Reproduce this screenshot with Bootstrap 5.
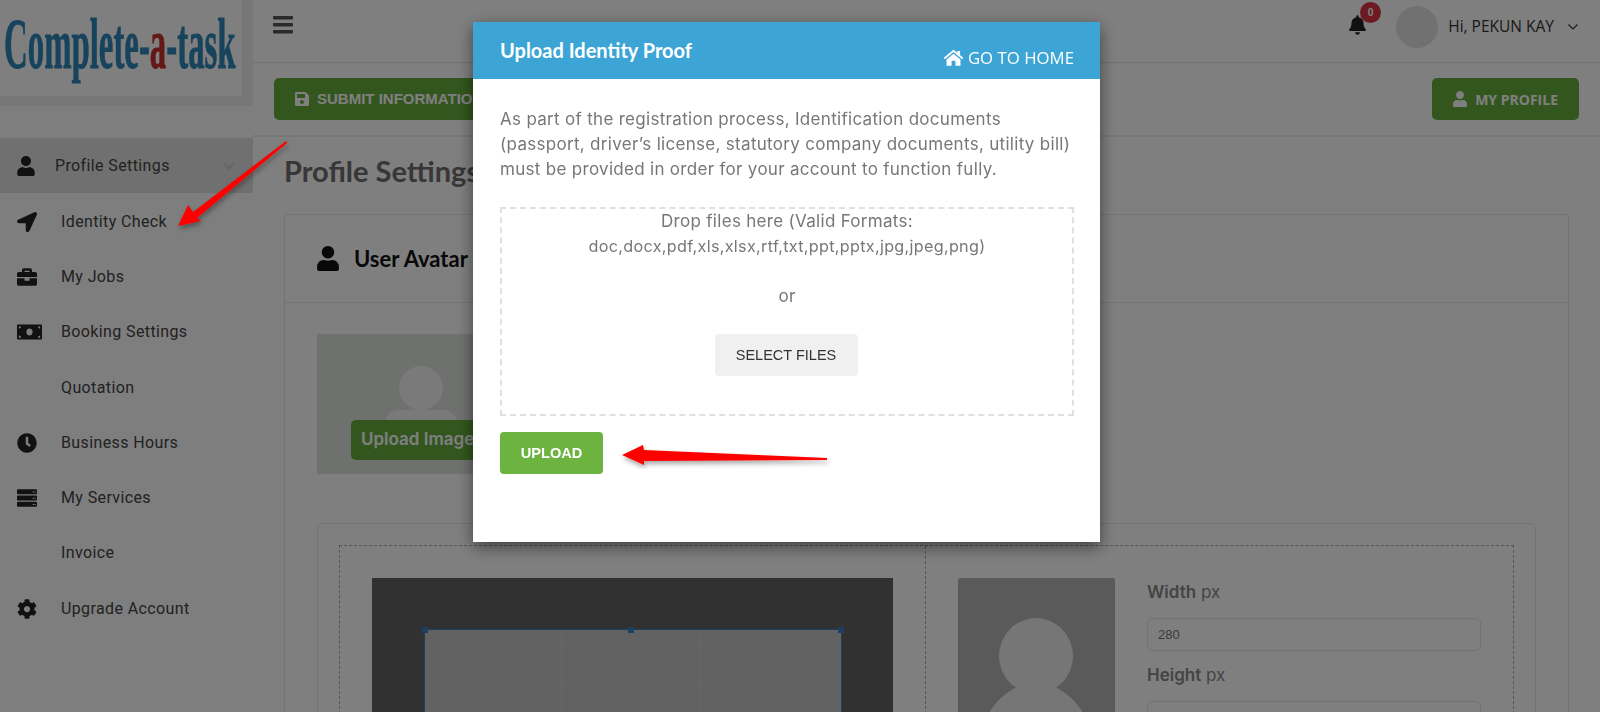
<!DOCTYPE html>
<html lang="en">
<head>
    <meta charset="UTF-8">
    <meta name="viewport" content="width=device-width, initial-scale=1.0">
    <title>Upload Identity Proof</title>
    <link href="https://cdn.jsdelivr.net/npm/bootstrap@5.3.0/dist/css/bootstrap.min.css" rel="stylesheet">
    <style>
        html, body { height: 712px; overflow: hidden; }
        body { background: #fff; font-family: "Roboto", sans-serif; color: #444; }
        .ico { fill: currentColor; display: block; flex: none; }

        .side-col { width: 253px; flex: none; height: 712px; background: #fcfcfc; }
        .logo-wrap { height: 106px; background: #eee; padding-right: 11px; padding-bottom: 10px; margin-bottom: 32px; }
        .logo-box { background: #fff; height: 96px; overflow: hidden; }
        .logo-word { font-family: "Liberation Serif", serif; font-weight: 700; font-size: 72px; line-height: 96px; color: #2f86b8; white-space: nowrap; display: inline-block; transform: translate(4px, -4px) scaleX(.456); transform-origin: left center; -webkit-text-stroke: .8px #2f86b8; }
        .logo-a { color: #c8302b; -webkit-text-stroke-color: #c8302b; }
        .side-row { height: 55.3px; padding-left: 17px; color: #444; font-size: 16px; text-decoration: none; letter-spacing: .38px; }
        .side-row .ico { color: #222; }
        .side-label { margin-left: 44px; }
        .side-icon { width: 44px; flex: none; }
        .side-icon + .side-label { margin-left: 0; }
        .side-active { background: #e0e0e0; height: 55px; margin-bottom: 1px; }
        .side-active .side-icon { width: 38px; }
        .side-chev { margin-left: auto; margin-right: 18px; color: #ccc; }

        .main-col { min-width: 0; }
        .top-strip { height: 63px; border-bottom: 1px solid #e2e2e2; padding: 0 22px 9px 20px; }
        .bell-wrap { margin-right: 30px; margin-bottom: 3px; }
        .bell-count { position: absolute; top: -13px; left: 11px; width: 21px; height: 21px; border-radius: 50%; background: #dc3545; color: #fff; font-size: 10px; font-weight: 700; line-height: 21px; text-align: center; }
        .face-dot { width: 42px; height: 42px; border-radius: 50%; background: #e2e2e2; margin-right: 10px; }
        .hi-name { font-family: "Open Sans", sans-serif; font-size: 15.5px; color: #333; margin-right: 14px; }
        .tool-strip { height: 74px; border-bottom: 2px solid #eee; padding: 15px 21px 0 21px; }
        .btn-green { background: #66ad3c; color: #fff; border: 0; border-radius: 5px; height: 42px; font-family: "Open Sans", sans-serif; font-weight: 700; font-size: 14px; padding: 0 21px; }
        .btn-green-arial { font-family: "Liberation Sans", sans-serif; font-size: 15px; }
        .page-title { font-family: "Lato", sans-serif; font-weight: 700; font-size: 29px; color: #6e6e6e; margin: 17px 0 26px 31px; line-height: 34px; white-space: nowrap; }

        .panel-box { margin: 0 31px 0 31px; border: 1px solid #e8e8e8; border-radius: 2px; }
        .panel-head { height: 88px; border-bottom: 1px solid #e8e8e8; padding-left: 32px; }
        .panel-head span { font-family: "Lato", sans-serif; font-weight: 700; font-size: 22px; color: #111; margin-left: 15px; }
        .panel-body { padding: 31px 32px; }
        .avatar-block { width: 270px; height: 140px; background: #dfe2df; margin-bottom: 49px; padding: 32px 0 0 0; }
        .avatar-round { width: 44px; height: 44px; border-radius: 50%; background: #f4f4f4; margin-left: 82px; }
        .avatar-torso { width: 72px; height: 14px; border-radius: 36px 36px 0 0; background: #f4f4f4; margin: 0 0 0 68px; }
        .upload-pill { position: absolute; left: 34px; top: 86px; height: 40px; width: 170px; background: #66ad3c; color: #fff; border: 0; border-radius: 5px; font-family: "Inter", sans-serif; font-weight: 600; font-size: 17px; text-align: left; padding-left: 10px; white-space: nowrap; }
        .crop-card { border: 1px solid #e8e8e8; border-radius: 5px; padding: 21px 21px 0; margin-right: 0; }
        .crop-dash { border: 1px dashed #aaa; height: 300px; }
        .crop-left { width: 586px; flex: none; border-right: 1px dashed #aaa; padding: 32px 0 0 32px; }
        .crop-stage { width: 521px; height: 300px; background: #626262; padding: 51px 0 0 52px; }
        .crop-area { width: 418px; height: 200px; background: #c4c4c4; border: 1px solid #3b7fc4; position: relative; }
        .crop-area::before, .crop-area::after { content: ""; position: absolute; top: 0; bottom: 0; border-left: 1px dashed #d4d4d4; }
        .crop-area::before { left: 136px; }
        .crop-area::after { left: 275px; }
        .crop-handle { position: absolute; width: 6px; height: 6px; background: #3b7fc4; top: -3px; }
        .crop-right { padding: 32px 0 0 32px; }
        .thumb-box { width: 157px; height: 300px; background: #b4b4b4; border-radius: 2px; overflow: hidden; }
        .thumb-svg { display: block; fill: #ececec; }
        .size-fields { width: 334px; margin-left: 32px; padding-top: 2px; }
        .size-fields label { font-family: "Inter", sans-serif; font-size: 17px; color: #888; margin-bottom: 14px; display: block; line-height: 24px; }
        .size-fields b { font-weight: 600; }
        .size-input { height: 33px; border: 1px solid #e4e4e4; border-radius: 5px; font-size: 13px; color: #777; padding: 0 10px; margin-bottom: 12px; line-height: 31px; font-family: "Liberation Sans", sans-serif; }

        .modal-dialog.proof-dialog { width: 627px; max-width: none; margin: 22px 0 0 473px; }
        .proof-dialog .modal-content { height: 520px; border: 0; border-radius: 0; box-shadow: 0 5px 15px rgba(0,0,0,.5); display: block; }
        .proof-head { height: 57px; background: #3ca5d6; color: #fff; padding: 0 26px 0 27px; }
        .proof-title { font-family: "Lato", sans-serif; font-weight: 700; font-size: 20px; margin-top: -1px; }
        .proof-home { font-family: "Open Sans", sans-serif; font-size: 16.8px; margin-top: 14px; }
        .proof-body { padding: 28px 26px 0 27px; font-family: "Inter", sans-serif; color: #777; font-size: 17px; line-height: 25px; letter-spacing: .3px; }
        .proof-text { margin-bottom: 25px; white-space: nowrap; }
        .drop-zone { height: 209px; border: 2px dashed #e0e0e0; text-align: center; margin-bottom: 16px; }
        .drop-types { font-size: 16.2px; letter-spacing: .3px; }
        .drop-or { margin-top: 25px; margin-bottom: 25px; color: #777; }
        .btn-pick { background: #f0f0f0; color: #333; border: 0; border-radius: 4px; width: 143px; height: 42px; font-family: "Liberation Sans", sans-serif; font-size: 14.5px; padding: 0; letter-spacing: 0; margin-right: 2px; }
        .btn-send { background: #6cb33f; color: #fff; border: 0; border-radius: 4px; width: 103px; height: 42px; font-family: "Liberation Sans", sans-serif; font-weight: 700; font-size: 14.6px; padding: 0; display: block; letter-spacing: 0; }
        .arrow-layer { position: fixed; inset: 0; z-index: 1060; pointer-events: none; }
    </style>
</head>
<body>
    <svg width="0" height="0" class="position-absolute">
        <symbol id="i-user" viewBox="0 0 448 512"><path d="M224 256c70.7 0 128-57.3 128-128S294.7 0 224 0 96 57.3 96 128s57.3 128 128 128zm89.6 32h-16.7c-22.2 10.2-46.9 16-72.9 16s-50.6-5.8-72.9-16h-16.7C60.2 288 0 348.2 0 422.4V464c0 26.5 21.5 48 48 48h352c26.5 0 48-21.5 48-48v-41.6c0-74.2-60.2-134.4-134.4-134.4z"/></symbol>
        <symbol id="i-arrow" viewBox="0 0 512 512"><path d="M444.52 3.52L28.74 195.42c-47.97 22.39-31.98 92.75 19.19 92.75h175.91v175.91c0 51.17 70.36 67.17 92.75 19.19l191.9-415.78c15.99-38.39-25.59-79.97-63.97-63.97z"/></symbol>
        <symbol id="i-case" viewBox="0 0 512 512"><path d="M320 336c0 8.84-7.16 16-16 16h-96c-8.84 0-16-7.16-16-16v-48H0v144c0 25.6 22.4 48 48 48h416c25.6 0 48-22.4 48-48V288H320v48zm144-208h-80V80c0-25.6-22.4-48-48-48H176c-25.6 0-48 22.4-48 48v48H48c-25.6 0-48 22.4-48 48v80h512v-80c0-25.6-22.4-48-48-48zm-144 0H192V96h128v32z"/></symbol>
        <symbol id="i-money" viewBox="0 0 640 512"><path fill-rule="evenodd" d="M608 64H32C14.3 64 0 78.3 0 96v320c0 17.7 14.3 32 32 32h576c17.700 0 32-14.300 32-32V96c0-17.700-14.300-32-32-32zM320 168c48 0 80 40 80 88s-32 88-80 88-80-40-80-88 32-88 80-88zM48 112h56c0 32-24 56-56 56zm0 288v-56c32 0 56 24 56 56zm544 0h-56c0-32 24-56 56-56zm0-232c-32 0-56-24-56-56h56z"/></symbol>
        <symbol id="i-clock" viewBox="0 0 512 512"><path d="M256,8C119,8,8,119,8,256S119,504,256,504,504,393,504,256,393,8,256,8Zm92.49,313h0l-20,25a16,16,0,0,1-22.49,2.5h0l-67-49.72a40,40,0,0,1-15-31.23V112a16,16,0,0,1,16-16h32a16,16,0,0,1,16,16V256l58,42.5A16,16,0,0,1,348.49,321Z"/></symbol>
        <symbol id="i-server" viewBox="0 0 512 512"><path fill-rule="evenodd" d="M24 32h464a24 24 0 0 1 24 24v80a24 24 0 0 1-24 24H24a24 24 0 0 1-24-24V56a24 24 0 0 1 24-24zm376 56v24h32V88zm48 0v24h32V88zM24 192h464a24 24 0 0 1 24 24v80a24 24 0 0 1-24 24H24a24 24 0 0 1-24-24v-80a24 24 0 0 1 24-24zm376 56v24h32v-24zm48 0v24h32v-24zM24 352h464a24 24 0 0 1 24 24v80a24 24 0 0 1-24 24H24a24 24 0 0 1-24-24v-80a24 24 0 0 1 24-24zm376 56v24h32v-24zm48 0v24h32v-24z"/></symbol>
        <symbol id="i-cog" viewBox="0 0 512 512"><path d="M487.4 315.7l-42.6-24.6c4.3-23.2 4.3-47 0-70.2l42.6-24.6c4.900-2.800 7.100-8.600 5.500-14-11.100-35.600-30-67.800-54.700-94.600-3.800-4.100-10-5.100-14.800-2.300L380.800 110c-17.900-15.400-38.500-27.300-60.800-35.100V25.800c0-5.600-3.900-10.500-9.400-11.700-36.700-8.200-74.300-7.800-109.200 0-5.500 1.200-9.400 6.100-9.400 11.700V75c-22.200 7.900-42.800 19.800-60.800 35.100L88.700 85.500c-4.900-2.800-11-1.900-14.800 2.300-24.700 26.700-43.600 58.900-54.700 94.600-1.700 5.400.6 11.200 5.500 14L67.300 221c-4.300 23.200-4.300 47 0 70.200l-42.600 24.600c-4.900 2.800-7.100 8.600-5.500 14 11.100 35.600 30 67.800 54.700 94.600 3.800 4.100 10 5.100 14.800 2.300l42.600-24.600c17.900 15.400 38.500 27.300 60.800 35.100v49.200c0 5.600 3.900 10.500 9.400 11.700 36.700 8.200 74.300 7.800 109.200 0 5.500-1.200 9.400-6.100 9.400-11.700v-49.200c22.200-7.900 42.800-19.800 60.800-35.100l42.600 24.600c4.900 2.800 11 1.900 14.800-2.300 24.700-26.700 43.600-58.900 54.700-94.600 1.500-5.500-.7-11.300-5.600-14.100zM256 336c-44.100 0-80-35.900-80-80s35.900-80 80-80 80 35.900 80 80-35.900 80-80 80z"/></symbol>
        <symbol id="i-bell" viewBox="0 0 448 512"><path d="M224 512c35.320 0 63.970-28.650 63.970-64H160.030c0 35.350 28.650 64 63.970 64zm215.390-149.710c-19.320-20.760-55.470-51.990-55.470-154.290 0-77.700-54.480-139.900-127.940-155.160V32c0-17.670-14.320-32-31.980-32s-31.980 14.330-31.980 32v20.840C118.560 68.100 64.080 130.300 64.080 208c0 102.300-36.150 133.530-55.470 154.290-6 6.450-8.660 14.160-8.610 21.710.11 16.400 12.980 32 32.100 32h383.800c19.120 0 32-15.600 32.100-32 .05-7.550-2.610-15.270-8.610-21.710z"/></symbol>
        <symbol id="i-save" viewBox="0 0 448 512"><path d="M433.941 129.941l-83.882-83.882A48 48 0 0 0 316.118 32H48C21.490 32 0 53.490 0 80v352c0 26.510 21.490 48 48 48h352c26.510 0 48-21.490 48-48V163.882a48 48 0 0 0-14.059-33.941zM224 416c-35.346 0-64-28.654-64-64 0-35.346 28.654-64 64-64s64 28.654 64 64c0 35.346-28.654 64-64 64zm96-304.520V212c0 6.627-5.373 12-12 12H76c-6.627 0-12-5.373-12-12V108c0-6.627 5.373-12 12-12h228.520c3.183 0 6.235 1.264 8.485 3.515l3.480 3.480A11.996 11.996 0 0 1 320 111.480z"/></symbol>
        <symbol id="i-home" viewBox="0 0 24 24"><path d="M12 3 .8 12.400l1.300 1.500L12 5.700l9.900 8.200 1.300-1.500L19.500 9.300V4.500h-3.200v2.200zM12 7.600 4 14.200V21.500h5.800v-5.700h4.400v5.700H20v-7.300z"/></symbol>
    </svg>

    <div class="d-flex">
        <aside class="side-col">
            <div class="logo-wrap">
                <div class="logo-box">
                    <span class="logo-word">Complete-<span class="logo-a">a</span>-task</span>
                </div>
            </div>
            <a class="side-row side-active d-flex align-items-center" href="#">
                <span class="side-icon"><svg class="ico" width="18" height="20"><use href="#i-user"/></svg></span>
                <span class="side-label">Profile Settings</span>
                <svg class="side-chev" width="12" height="8" viewBox="0 0 12 8" fill="none" stroke="currentColor" stroke-width="2.500"><path d="M1 1.500l5 5 5-5"/></svg>
            </a>
            <a class="side-row d-flex align-items-center" href="#"><span class="side-icon"><svg class="ico" width="20" height="20"><use href="#i-arrow"/></svg></span><span class="side-label">Identity Check</span></a>
            <a class="side-row d-flex align-items-center" href="#"><span class="side-icon"><svg class="ico" width="20" height="20"><use href="#i-case"/></svg></span><span class="side-label">My Jobs</span></a>
            <a class="side-row d-flex align-items-center" href="#"><span class="side-icon"><svg class="ico" width="25" height="20"><use href="#i-money"/></svg></span><span class="side-label">Booking Settings</span></a>
            <a class="side-row d-flex align-items-center" href="#"><span class="side-label">Quotation</span></a>
            <a class="side-row d-flex align-items-center" href="#"><span class="side-icon"><svg class="ico" width="20" height="20"><use href="#i-clock"/></svg></span><span class="side-label">Business Hours</span></a>
            <a class="side-row d-flex align-items-center" href="#"><span class="side-icon"><svg class="ico" width="20" height="20"><use href="#i-server"/></svg></span><span class="side-label">My Services</span></a>
            <a class="side-row d-flex align-items-center" href="#"><span class="side-label">Invoice</span></a>
            <a class="side-row d-flex align-items-center" href="#"><span class="side-icon"><svg class="ico" width="20" height="20"><use href="#i-cog"/></svg></span><span class="side-label">Upgrade Account</span></a>
        </aside>

        <main class="main-col flex-grow-1">
            <div class="top-strip d-flex align-items-center">
                <svg width="20" height="18" viewBox="0 0 20 18" fill="#555" class="mb-1"><rect width="20" height="3.500" rx="1"/><rect y="7" width="20" height="3.500" rx="1"/><rect y="14" width="20" height="3.500" rx="1"/></svg>
                <div class="position-relative ms-auto bell-wrap">
                    <svg class="ico" width="17" height="20" color="#222"><use href="#i-bell"/></svg>
                    <span class="bell-count">0</span>
                </div>
                <div class="face-dot"></div>
                <span class="hi-name">Hi, PEKUN KAY</span>
                <svg width="10" height="6" viewBox="0 0 10 6" fill="none" stroke="#333" stroke-width="1.200"><path d="M.5.500l4.500 4.500L9.500.500"/></svg>
            </div>
            <div class="tool-strip d-flex justify-content-between">
                <button class="btn-green btn-green-arial d-flex align-items-center gap-2" type="button"><svg class="ico" width="14" height="16"><use href="#i-save"/></svg>SUBMIT INFORMATION</button>
                <button class="btn-green d-flex align-items-center gap-2" type="button"><svg class="ico" width="14" height="16"><use href="#i-user"/></svg>MY PROFILE</button>
            </div>
            <h1 class="page-title">Profile Settings</h1>
            <div class="panel-box">
                <div class="panel-head d-flex align-items-center">
                    <svg class="ico" width="22" height="25" color="#111"><use href="#i-user"/></svg>
                    <span>User Avatar</span>
                </div>
                <div class="panel-body">
                    <div class="avatar-block position-relative">
                        <div class="avatar-round"></div>
                        <div class="avatar-torso"></div>
                        <button class="upload-pill" type="button">Upload Image</button>
                    </div>
                    <div class="crop-card">
                        <div class="crop-dash d-flex">
                            <div class="crop-left">
                                <div class="crop-stage">
                                    <div class="crop-area">
                                        <i class="crop-handle" style="left:-3px"></i>
                                        <i class="crop-handle" style="left:203px"></i>
                                        <i class="crop-handle" style="right:-3px"></i>
                                    </div>
                                </div>
                            </div>
                            <div class="crop-right d-flex">
                                <div class="thumb-box">
                                    <svg class="thumb-svg" width="157" height="300" viewBox="0 0 157 300"><ellipse cx="78" cy="78" rx="37" ry="38"/><ellipse cx="78" cy="190" rx="62" ry="85"/></svg>
                                </div>
                                <div class="size-fields">
                                    <label><b>Width</b> px</label>
                                    <div class="size-input">280</div>
                                    <label><b>Height</b> px</label>
                                    <div class="size-input"></div>
                                </div>
                            </div>
                        </div>
                    </div>
                </div>
            </div>
        </main>
    </div>

    <div class="modal-backdrop show"></div>
    <div class="modal show d-block" tabindex="-1">
        <div class="modal-dialog proof-dialog">
            <div class="modal-content">
                <div class="proof-head d-flex justify-content-between align-items-center">
                    <div class="proof-title">Upload Identity Proof</div>
                    <div class="proof-home d-flex align-items-center gap-1"><svg class="ico" width="21" height="21"><use href="#i-home"/></svg>GO TO HOME</div>
                </div>
                <div class="proof-body">
                    <p class="proof-text">As part of the registration process, Identification documents<br>(passport, driver’s license, statutory company documents, utility bill)<br>must be provided in order for your account to function fully.</p>
                    <div class="drop-zone">
                        <div>Drop files here (Valid Formats:<br><span class="drop-types">doc,docx,pdf,xls,xlsx,rtf,txt,ppt,pptx,jpg,jpeg,png)</span></div>
                        <div class="drop-or">or</div>
                        <button class="btn-pick" type="button">SELECT FILES</button>
                    </div>
                    <button class="btn-send" type="button">UPLOAD</button>
                </div>
            </div>
        </div>
    </div>

    <svg class="arrow-layer" width="1600" height="712" viewBox="0 0 1600 712">
        <defs><filter id="arrow-shade" x="-20%" y="-20%" width="140%" height="140%"><feDropShadow dx="1" dy="3" stdDeviation="2.500" flood-color="#000" flood-opacity=".35"/></filter></defs>
        <polygon filter="url(#arrow-shade)" fill="#f00" points="286,141 287,143 197,218 201,221 178,226 188,205 193,212"/>
        <polygon filter="url(#arrow-shade)" fill="#f00" points="827,458 827,460 644,461 644,465 622,455 643,445 644,450"/>
    </svg>
</body>
</html>
